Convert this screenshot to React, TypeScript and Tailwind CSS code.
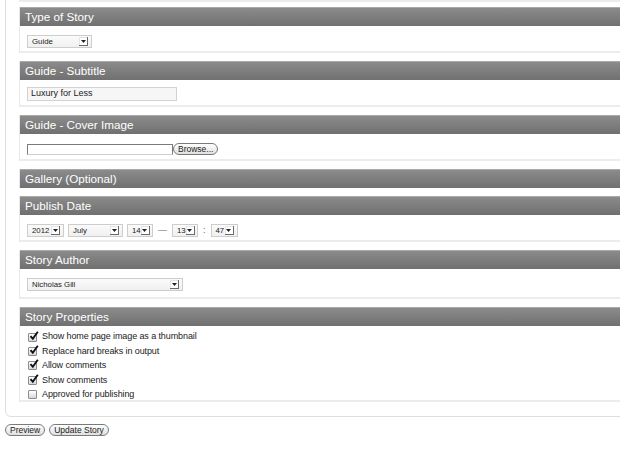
import React from "react";

const font = { fontFamily: '"Liberation Sans", Arial, sans-serif' };

const Arrow: React.FC = () => (
  <span className="flex h-[9px] w-[9px] shrink-0 items-center justify-center border-r border-b border-[#6a6a6a] bg-white shadow-[inset_1px_1px_0_#e5e5e5]">
    <svg width="5" height="3" viewBox="0 0 5 3">
      <path d="M0 0h5L2.5 3z" fill="#222" />
    </svg>
  </span>
);

const Select: React.FC<{ value: string; w: string }> = ({ value, w }) => (
  <div
    className={`flex h-[13px] items-center justify-between border border-[#cdcdcd] bg-gradient-to-b from-[#fbfbfb] to-[#f0f0f0] pl-[4px] pr-[3px] text-[7.8px] text-[#1a1a1a] ${w}`}
  >
    <span>{value}</span>
    <Arrow />
  </div>
);

const Section: React.FC<{
  title: string;
  body?: string;
  children?: React.ReactNode;
}> = ({ title, body = "h-[27px]", children }) => (
  <div className="border-l border-[#e8e8e8] bg-white">
    <div className="flex h-[19px] items-center border-t border-[#a9a9a9] bg-gradient-to-b from-[#8b8b8b] to-[#707070] pl-[5px] text-[11.7px] text-white">
      {title}
    </div>
    {children && (
      <div className={`border-b-2 border-[#ececec] px-[7px] pt-[9px] ${body}`}>
        {children}
      </div>
    )}
  </div>
);

const Check: React.FC<{ label: string; checked?: boolean }> = ({
  label,
  checked,
}) => (
  <div className="flex h-[14.4px] items-center gap-[5px] text-[9px] tracking-[-0.1px] text-[#222]">
    <span className="relative flex h-[9px] w-[9px] items-center justify-center rounded-[1px] border border-[#8c8c8c] bg-gradient-to-b from-white to-[#d8d8d8]">
      {checked && (
        <svg
          width="10"
          height="10"
          viewBox="0 0 10 10"
          className="absolute -top-[3px] left-0"
        >
          <path
            d="M1.5 5.2 L3.8 7.8 L8.8 0.8"
            stroke="#111"
            strokeWidth="1.9"
            fill="none"
          />
        </svg>
      )}
    </span>
    <span>{label}</span>
  </div>
);

const Pill: React.FC<{ label: string }> = ({ label }) => (
  <span className="flex h-[12px] items-center rounded-full border border-[#7a7a7a] bg-gradient-to-b from-white to-[#e0e0e0] px-[4px] text-[8.5px] text-[#222]">
    {label}
  </span>
);

export default function App() {
  return (
    <div className="h-[450px] w-[620px] overflow-hidden bg-white" style={font}>
      <div className="-mt-[6px] ml-[5px] w-[640px] rounded-md border border-[#dedede] pb-[14px] pl-[13px]">
        <div className="flex flex-col gap-[8px]">
          <div className="h-[7px] border-b-2 border-l border-[#ececec]" />
          <div className="-mt-[3px] flex flex-col gap-[8px]">
            <Section title="Type of Story">
              <Select value="Guide" w="w-[65px]" />
            </Section>
            <Section title="Guide - Subtitle">
              <div className="-mt-[2px] flex h-[14px] w-[150px] items-center border border-[#d2d2d2] bg-[#f6f6f6] pl-[3px] text-[9px] text-[#222]">
                Luxury for Less
              </div>
            </Section>
            <Section title="Guide - Cover Image">
              <div className="flex items-center">
                <div className="h-[11px] w-[146px] border border-[#7a7a7a] border-b-[#d0d0d0] bg-white" />
                <Pill label="Browse..." />
              </div>
            </Section>
            <Section title="Gallery (Optional)" />
            <Section title="Publish Date">
              <div className="flex items-center gap-[4px] text-[9px] text-[#666]">
                <Select value="2012" w="w-[37px]" />
                <Select value="July" w="w-[55px]" />
                <Select value="14" w="w-[26px]" />
                <span className="px-[1px]">—</span>
                <Select value="13" w="w-[26px]" />
                <span className="px-[1px]">:</span>
                <Select value="47" w="w-[27px]" />
              </div>
            </Section>
            <Section title="Story Author" body="h-[30px]">
              <Select value="Nicholas Gill" w="w-[156px]" />
            </Section>
            <Section title="Story Properties" body="h-[76px]">
              <div className="-mt-[5px] pl-[1px]">
                <Check label="Show home page image as a thumbnail" checked />
                <Check label="Replace hard breaks in output" checked />
                <Check label="Allow comments" checked />
                <Check label="Show comments" checked />
                <Check label="Approved for publishing" />
              </div>
            </Section>
          </div>
        </div>
      </div>
      <div className="mt-[7px] ml-[5px] flex gap-[4px]">
        <Pill label="Preview" />
        <Pill label="Update Story" />
      </div>
    </div>
  );
}
